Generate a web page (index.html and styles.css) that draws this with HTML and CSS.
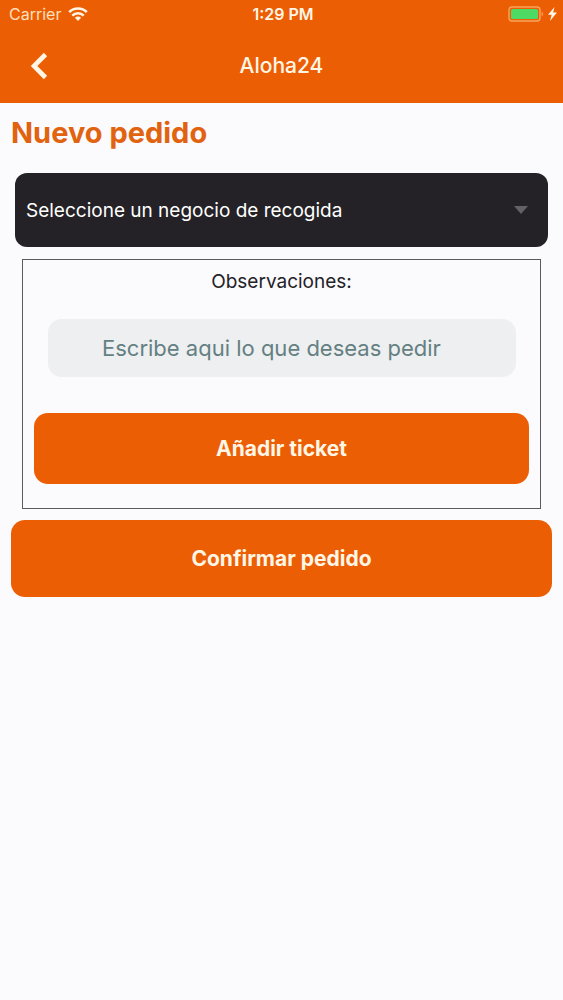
FILE: index.html
```html
<!DOCTYPE html>
<html lang="es">

<head>
    <meta charset="UTF-8">
    <meta name="viewport" content="width=device-width, initial-scale=1.0">
    <title>Aloha24</title>
    <link rel="stylesheet" href="styles.css">
</head>

<body>
    <header>
        <div class="status-bar">
            <div class="carrier">
                <span>Carrier</span>
                <svg class="wifi" viewBox="0 0 20 14" fill="none" stroke="currentColor" stroke-width="2.6">
                    <path d="M1.2 5.1C6 .3 14 .3 18.8 5.1" />
                    <path d="M4.300 8.600C7.500 5.400 12.500 5.400 15.700 8.600" />
                    <path d="M10 13.900 6.900 10.800C8.700 9.200 11.300 9.200 13.100 10.800Z" fill="currentColor" stroke="none" />
                </svg>
            </div>
            <span class="time">1:29 PM</span>
            <div class="power">
                <svg class="battery" viewBox="0 0 36 16">
                    <rect x="1" y="1" width="31" height="14" rx="3" fill="none" stroke="#f9a45c" stroke-width="1.4" />
                    <rect x="3" y="3" width="27" height="10" rx="1.5" fill="#4cd964" />
                    <path d="M33.700 5.500C35.400 6.300 35.400 9.700 33.700 10.500Z" fill="#f9a45c" />
                </svg>
                <svg class="bolt" viewBox="0 0 9 14">
                    <path d="M6.500 0 0 7.800H3.600L2 14 9 5.600H5.200Z" fill="currentColor" />
                </svg>
            </div>
        </div>
        <nav class="nav-bar">
            <button class="back-btn" type="button" aria-label="Volver">
                <svg viewBox="0 0 18 28" fill="none" stroke="currentColor" stroke-width="4.6">
                    <path d="M15.500 2.500 4 14 15.500 25.500" />
                </svg>
            </button>
            <h1>Aloha24</h1>
        </nav>
    </header>

    <main>
        <h2>Nuevo pedido</h2>
        <form class="order">
            <div class="business">
                <select class="business-select" aria-label="Negocio de recogida">
                    <option>Seleccione un negocio de recogida</option>
                </select>
                <svg class="arrow" viewBox="0 0 14 8">
                    <path d="M0 0H14L7 8Z" fill="#626165" />
                </svg>
            </div>
            <div class="ticket">
                <label for="notes">Observaciones:</label>
                <input class="notes" id="notes" type="text" placeholder="Escribe aqui lo que deseas pedir">
                <button class="btn" type="button">Añadir ticket</button>
            </div>
            <button class="btn confirm-btn" type="submit">Confirmar pedido</button>
        </form>
    </main>
</body>

</html>
```

FILE: styles.css
```css
* {
    box-sizing: border-box;
}

body {
    margin: 0;
    min-height: 100vh;
    background: #fbfafd;
    color: #242226;
    font-family: Inter, "Liberation Sans", sans-serif;
}

header {
    background: #ec5e04;
    color: #fff6e6;
}

.status-bar {
    display: grid;
    grid-template-columns: 1fr auto 1fr;
    align-items: center;
    height: 28px;
    padding: 0 6px 0 9px;
    font-size: 16px;
}

.carrier {
    display: flex;
    align-items: center;
    gap: 7px;
    color: #ffe0bd;
}

.wifi {
    width: 20px;
    height: 14px;
    color: #fff6e6;
}

.time {
    font-weight: 600;
}

.power {
    display: flex;
    align-items: center;
    justify-content: flex-end;
    gap: 4px;
}

.battery {
    width: 36px;
    height: 16px;
}

.bolt {
    width: 9px;
    height: 14px;
}

.nav-bar {
    display: grid;
    grid-template-columns: 1fr auto 1fr;
    align-items: center;
    height: 75px;
    padding: 0 20px;
}

.nav-bar h1 {
    margin: 0;
    font-size: 21px;
    font-weight: 500;
}

.back-btn {
    display: flex;
    justify-content: center;
    width: 38px;
    padding: 8px;
    background: none;
    border: none;
    color: inherit;
    cursor: pointer;
}

.back-btn svg {
    width: 18px;
    height: 28px;
}

main {
    padding: 12px 11px;
}

h2 {
    margin: 0 0 22px;
    color: #e1620f;
    font-size: 29px;
    font-weight: 700;
    line-height: 36px;
}

.business {
    display: grid;
    align-items: center;
    margin: 0 4px 12px;
}

.business-select,
.arrow {
    grid-area: 1 / 1;
}

.business-select {
    appearance: none;
    width: 100%;
    height: 74px;
    padding: 0 40px 0 11px;
    background: #242226;
    border: none;
    border-radius: 12px;
    color: #fff;
    font-family: inherit;
    font-size: 19px;
}

.arrow {
    justify-self: end;
    width: 14px;
    height: 8px;
    margin-right: 20px;
    pointer-events: none;
}

.ticket {
    display: flex;
    flex-direction: column;
    margin: 0 11px 11px;
    padding: 10px 11px 24px;
    border: 1px solid #5c5a5e;
}

.ticket label {
    margin-bottom: 25px;
    font-size: 19px;
    line-height: 24px;
    text-align: center;
}

.notes {
    height: 58px;
    margin: 0 13px 36px 14px;
    padding: 0 54px;
    background: #eeeff1;
    border: none;
    border-radius: 14px;
    color: #242226;
    font-family: inherit;
    font-size: 22px;
}

.notes::placeholder {
    color: #648082;
    opacity: 1;
}

.btn {
    width: 100%;
    height: 71px;
    background: #ec5e04;
    border: none;
    border-radius: 14px;
    color: #fff6e6;
    font-family: inherit;
    font-size: 21px;
    font-weight: 700;
    cursor: pointer;
}

.confirm-btn {
    height: 77px;
}
```
